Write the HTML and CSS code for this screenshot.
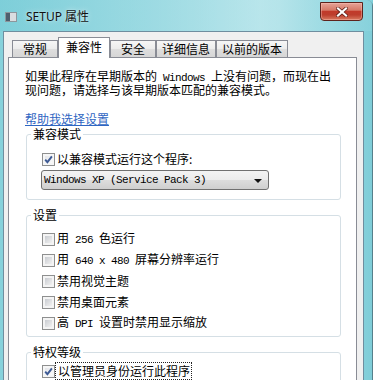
FILE: index.html
```html
<!DOCTYPE html>
<html lang="zh-CN">
<head>
<meta charset="utf-8">
<title>SETUP 属性</title>
<link rel="stylesheet" href="styles.css">
</head>
<body>
<div class="window">
  <div class="titlebar">
    <span class="app-icon"><span class="app-icon-side"></span></span>
    <span class="title">SETUP 属性</span>
    <button class="close" type="button" aria-label="关闭">
      <svg width="12" height="10" viewBox="0 0 12 10">
        <path d="M2 1.5 L10 8.5 M10 1.5 L2 8.5" stroke="#5a1a12" stroke-width="3.6" stroke-linecap="square" fill="none"/>
        <path d="M2 1.5 L10 8.5 M10 1.5 L2 8.5" stroke="#ffffff" stroke-width="2.2" stroke-linecap="square" fill="none"/>
      </svg>
    </button>
  </div>
  <div class="client">
    <div class="tabs">
      <div class="tab">常规</div>
      <div class="tab active">兼容性</div>
      <div class="tab">安全</div>
      <div class="tab">详细信息</div>
      <div class="tab">以前的版本</div>
    </div>
    <div class="panel">
      <p class="intro">如果此程序在早期版本的<span class="mono"> Windows </span>上没有问题，而现在出现问题，请选择与该早期版本匹配的兼容模式。</p>
      <a class="help" href="#">帮助我选择设置</a>

      <fieldset class="group">
        <legend>兼容模式</legend>
        <div class="group-body compat">
          <label class="check">
            <span class="cb checked"><svg width="9" height="9" viewBox="0 0 9 9"><path d="M1.2 4.6 L3.4 7.2 L7.9 1.4" stroke="#3d5a94" stroke-width="1.9" fill="none"/></svg></span>
            <span>以兼容模式运行这个程序:</span>
          </label>
          <div class="select">
            <span class="mono">Windows XP (Service Pack 3)</span>
            <span class="arrow"></span>
          </div>
        </div>
      </fieldset>

      <fieldset class="group">
        <legend>设置</legend>
        <div class="group-body settings">
          <label class="check"><span class="cb"></span><span>用<span class="mono"> 256 </span>色运行</span></label>
          <label class="check"><span class="cb"></span><span>用<span class="mono"> 640 x 480 </span>屏幕分辨率运行</span></label>
          <label class="check"><span class="cb"></span><span>禁用视觉主题</span></label>
          <label class="check"><span class="cb"></span><span>禁用桌面元素</span></label>
          <label class="check"><span class="cb"></span><span>高<span class="mono"> DPI </span>设置时禁用显示缩放</span></label>
        </div>
      </fieldset>

      <fieldset class="group">
        <legend>特权等级</legend>
        <div class="group-body privilege">
          <label class="check">
            <span class="cb checked"><svg width="9" height="9" viewBox="0 0 9 9"><path d="M1.2 4.6 L3.4 7.2 L7.9 1.4" stroke="#3d5a94" stroke-width="1.9" fill="none"/></svg></span>
            <span class="focus">以管理员身份运行此程序</span>
          </label>
        </div>
      </fieldset>
    </div>
  </div>
</div>
</body>
</html>
```

FILE: styles.css
```css
* { box-sizing: border-box; }

html, body { margin: 0; padding: 0; }

body {
  width: 373px;
  height: 380px;
  overflow: hidden;
  background-color: #7ccdd8;
  font-family: "Noto Sans CJK SC", "Noto Sans", sans-serif;
  font-size: 12px;
  color: #000;
}

.window {
  height: 380px;
  display: flex;
  flex-direction: column;
  background-color: #92d5de;
  background-image: linear-gradient(90deg, #86d1db 0%, #9cdae2 30%, #a9dfe6 55%, #b6e4ea 75%, #9adae2 88%, #7fcdd8 100%);
  border-right: 1px solid #56808b;
  border-top-right-radius: 6px;
}

/* title bar */
.titlebar {
  height: 31px;
  flex: none;
  display: flex;
  align-items: flex-start;
  padding-left: 5px;
  background-image: linear-gradient(90deg, rgba(120, 205, 216, 0.6) 0%, rgba(150, 216, 225, 0.5) 40%, rgba(190, 232, 237, 0.5) 70%, rgba(140, 212, 222, 0.6) 100%);
}

.app-icon {
  margin-top: 12px;
  width: 12px;
  height: 10px;
  background: #d9dde0;
  border: 1px solid #8d969c;
  display: flex;
}

.app-icon-side {
  width: 4px;
  background: #4d5e6e;
}

.title {
  margin-left: 9px;
  margin-top: 9px;
  line-height: 16px;
  font-family: "Noto Sans", "Noto Sans CJK SC", sans-serif;
  font-size: 12px;
  color: #111;
  text-shadow: 0 0 6px rgba(255, 255, 255, 0.6), 0 0 2px rgba(255, 255, 255, 0.5);
}

.close {
  margin-left: auto;
  margin-top: 2px;
  margin-right: 9px;
  width: 43px;
  height: 19px;
  padding: 0;
  border: 1px solid #5e231c;
  border-radius: 0 0 4px 4px;
  background: linear-gradient(#e6a397 0%, #d67a68 42%, #c13a2a 50%, #bd3e2d 70%, #d87a60 100%);
  box-shadow: inset 0 0 0 1px rgba(255, 200, 190, 0.4);
  display: flex;
  align-items: center;
  justify-content: center;
}

/* client area */
.client {
  flex: 1;
  margin-left: 3px;
  margin-right: 8px;
  background: #f0f0f0;
  border: 1px solid #6f8e9f;
  border-bottom: none;
  padding: 5px 6px 0 4px;
  display: flex;
  flex-direction: column;
}

.tabs {
  display: flex;
  align-items: flex-end;
  height: 21px;
  margin-bottom: -1px;
  padding-left: 4px;
  position: relative;
  z-index: 1;
}

.tab {
  height: 17px;
  margin-bottom: 1px;
  min-width: 46px;
  padding: 0 5px;
  border: 1px solid #898c95;
  border-bottom: none;
  background: linear-gradient(#f6f6f6 0%, #ececec 50%, #dedede 51%, #d6d6d6 100%);
  display: flex;
  align-items: center;
  justify-content: center;
  line-height: 14px;
  white-space: nowrap;
}

.tab.active {
  height: 21px;
  margin-bottom: 0;
  padding: 0 7px 3px;
  background: #fff;
}

.panel {
  flex: 1;
  background: #fff;
  border: 1px solid #898c95;
  border-bottom: none;
  padding-top: 12px;
}

.mono {
  font-family: "Liberation Mono", monospace;
  font-size: 11px;
  letter-spacing: -0.6px;
  white-space: pre;
}

.intro {
  margin: 0 16px;
  line-height: 12px;
}

.help {
  display: block;
  width: fit-content;
  margin: 17px 16px 2px;
  line-height: 12px;
  color: #2f66c2;
  text-decoration: underline;
}

/* group boxes */
.group {
  margin: 0 15px 0 17px;
  padding: 0 4px;
  border: 1px solid #d5dfe5;
  border-radius: 3px;
  min-width: 0;
}

.group + .group { margin-top: 8px; }

.group legend {
  padding: 0 2px;
  line-height: 14px;
}

.group-body {
  padding-left: 11px;
}

.group-body.compat { padding-top: 11px; padding-bottom: 9px; }

.group-body.settings {
  padding-top: 10px;
  padding-bottom: 6px;
  display: flex;
  flex-direction: column;
  gap: 7px;
}

.group-body.privilege { padding-top: 5px; padding-bottom: 8px; }

.check {
  display: flex;
  align-items: center;
  gap: 2px;
  height: 14px;
  line-height: 14px;
  white-space: nowrap;
}

.cb {
  flex: none;
  width: 13px;
  height: 13px;
  border: 1px solid #8e8f8f;
  padding: 2px;
  background: linear-gradient(135deg, #c9ccd1, #f1f1f1) content-box, #f4f4f4;
  display: inline-flex;
  align-items: center;
  justify-content: center;
}

.cb.checked {
  background: linear-gradient(135deg, #e2e4e8, #fbfbfb) content-box, #f6f6f6;
}

.cb svg { flex: none; }

.focus {
  outline: 1px dotted #222;
  outline-offset: 1px;
  padding: 0 0 0 1px;
}

.select {
  margin-top: 4px;
  margin-left: -1px;
  width: 228px;
  height: 20px;
  border: 1px solid #707070;
  border-radius: 3px;
  padding: 0 6px 0 2px;
  background: linear-gradient(#f3f3f3 0%, #ebebeb 50%, #dddddd 51%, #cfcfcf 100%);
  display: flex;
  align-items: center;
  justify-content: space-between;
}

.arrow {
  width: 0;
  height: 0;
  border-left: 4px solid transparent;
  border-right: 4px solid transparent;
  border-top: 4px solid #111;
  margin-top: 1px;
}
```
